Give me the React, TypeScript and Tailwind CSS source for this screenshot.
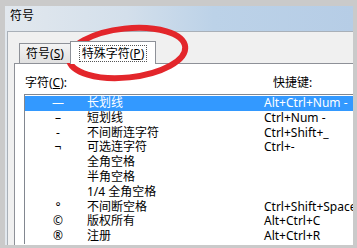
const rows = [
  { sym: "—", name: "长划线", key: "Alt+Ctrl+Num -" },
  { sym: "–", name: "短划线", key: "Ctrl+Num -" },
  { sym: "-", name: "不间断连字符", key: "Ctrl+Shift+_" },
  { sym: "¬", name: "可选连字符", key: "Ctrl+-" },
  { sym: "", name: "全角空格", key: "" },
  { sym: "", name: "半角空格", key: "" },
  { sym: "", name: "1/4 全角空格", key: "" },
  { sym: "°", name: "不间断空格", key: "Ctrl+Shift+Space" },
  { sym: "©", name: "版权所有", key: "Alt+Ctrl+C" },
  { sym: "®", name: "注册", key: "Alt+Ctrl+R" },
];

const font = { fontFamily: '"Noto Sans", "Noto Sans CJK SC", sans-serif' };

const App = () => {
  return (
    <div
      className="relative w-[357px] h-[248px] overflow-hidden bg-[#cacaca] pt-[6px] pl-[5px] pr-[4px] pb-[3px] text-[12px] text-black"
      style={font}
    >
      <div className="h-full flex flex-col overflow-hidden bg-[linear-gradient(90deg,#e2e8ee_0%,#d3dfeb_35%,#bcd2e8_60%,#b6cde6_100%)]">
        {/* title */}
        <div className="h-[25px] shrink-0 pl-[5px] pt-[2px] leading-[16px]">符号</div>

        {/* client */}
        <div className="flex-1 flex flex-col ml-[2px] border-l border-t border-[#a9b0b8] bg-[#f0f0f0] pt-[9px] min-w-0">
          <div className="relative z-10 flex items-end h-[22px] pl-[11px] shrink-0">
            <div className="h-[20px] w-[52px] border border-b-0 border-[#8e9198] bg-[linear-gradient(180deg,#f4f4f4,#e0e0e0)] flex items-center justify-center leading-[14px]">
              <span>
                符号(<span className="underline underline-offset-1">S</span>)
              </span>
            </div>
            <div className="h-[23px] w-[86px] -ml-px -mb-px border border-b-0 border-[#8e9198] bg-white flex items-start justify-center pt-[3px]">
              <span className="border border-dotted border-[#555] px-[2px] leading-[15px]">
                特殊字符(<span className="underline underline-offset-1">P</span>)
              </span>
            </div>
          </div>

          {/* tab page */}
          <div className="flex-1 ml-[6px] w-[360px] border-l border-t border-[#8e9198] bg-white pt-[12px] shrink-0">
            <div className="flex leading-[14px] pl-[10px]">
              <div className="w-[248px]">
                字符(<span className="underline underline-offset-1">C</span>):
              </div>
              <div>快捷键:</div>
            </div>

            <div className="mt-[4px] ml-[9px] border-l border-t border-[#828790] pt-px">
              {rows.map((r, i) => (
                <div
                  key={i}
                  className={
                    "flex h-[14.8px] leading-[14.8px] whitespace-nowrap " +
                    (i === 0 ? "bg-[#3399ff] text-white" : "")
                  }
                >
                  <div className="w-[62px] pl-[4px] flex justify-center">{r.sym}</div>
                  <div className="w-[177px]">{r.name}</div>
                  <div>{r.key}</div>
                </div>
              ))}
            </div>
          </div>
        </div>
      </div>

      {/* red annotation ring */}
      <svg className="absolute left-0 top-0 pointer-events-none" width="357" height="248">
        <ellipse
          cx="127"
          cy="53"
          rx="58.5"
          ry="24.5"
          transform="rotate(-6 127 53)"
          fill="none"
          stroke="#e3262b"
          strokeWidth="6"
        />
      </svg>
    </div>
  );
};

export default App;
